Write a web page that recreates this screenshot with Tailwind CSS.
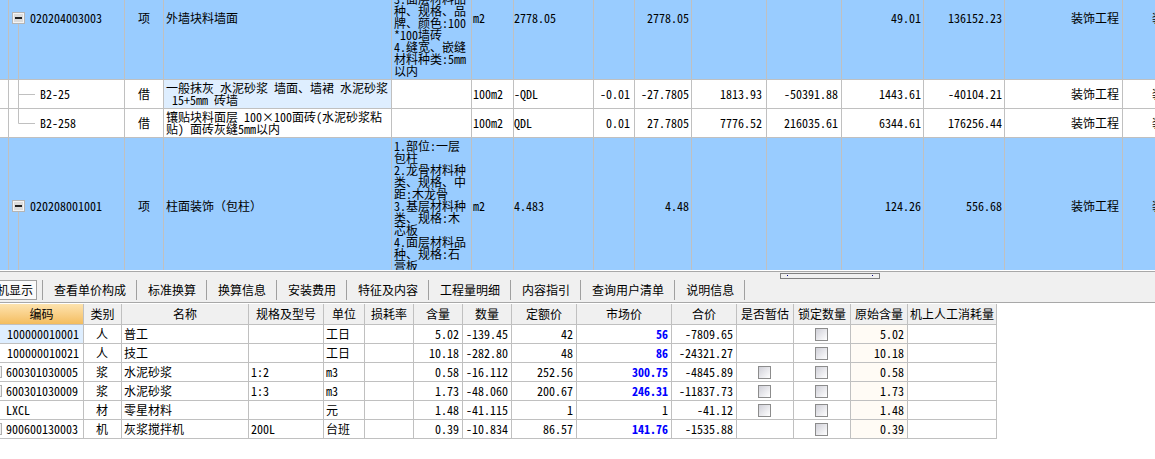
<!DOCTYPE html>
<html lang="zh-CN">
<head>
<meta charset="utf-8">
<script src="https://cdn.jsdelivr.net/npm/@tailwindcss/browser@4"></script>
<title>分部分项</title>
</head>
<body class="m-0 bg-white w-[1155px] h-[459px] overflow-hidden text-[12px] leading-[12px] text-black font-['Noto_Sans_Mono_CJK_SC','Noto_Sans_CJK_SC','Liberation_Mono',monospace]">

<!-- upper grid -->
<div class="relative h-[270px] overflow-hidden">
  <table class="-mt-[43px] table-fixed border-separate border-spacing-0 w-[1323px] [&_td]:border-r [&_td]:border-b [&_td]:border-[#c0c0c0] [&_td]:align-middle [&_td]:px-[2px] [&_td]:py-0 [&_td]:whitespace-pre">
    <colgroup>
      <col class="w-[9px]"><col class="w-[116px]"><col class="w-[39px]"><col class="w-[228px]"><col class="w-[80px]"><col class="w-[42px]"><col class="w-[80px]"><col class="w-[41px]"><col class="w-[57px]"><col class="w-[75px]"><col class="w-[75px]"><col class="w-[82px]"><col class="w-[81px]"><col class="w-[118px]"><col class="w-[200px]">
    </colgroup>
    <tbody>
      <tr class="h-[123px] bg-[#99ccff]">
        <td></td>
        <td class="!pl-[21px]">020204003003</td>
        <td class="text-center">项</td>
        <td>外墙块料墙面</td>
        <td class="!align-bottom !pb-[2px]">3.面层材料品<br>种、规格、品<br>牌、颜色:100<br>*100墙砖<br>4.缝宽、嵌缝<br>材料种类:5mm<br>以内</td>
        <td class="!pl-[1px]">m2</td>
        <td class="!pl-0">2778.05</td>
        <td></td>
        <td class="text-right">2778.05</td>
        <td></td>
        <td></td>
        <td class="text-right">49.01</td>
        <td class="text-right">136152.23</td>
        <td class="text-right !pr-[3px]">装饰工程</td>
        <td class="!pl-[29px]">装饰工程</td>
      </tr>
      <tr class="h-[29px] bg-white">
        <td></td>
        <td class="!pl-[31px]">B2-25</td>
        <td class="text-center">借</td>
        <td class="!bg-[#deeeff]">一般抹灰 水泥砂浆 墙面、墙裙 水泥砂浆<br> 15+5mm 砖墙</td>
        <td></td>
        <td class="!pl-[1px]">100m2</td>
        <td class="!pl-0">-QDL</td>
        <td class="text-right !pr-[4px]">-0.01</td>
        <td class="text-right">-27.7805</td>
        <td class="text-right !pr-[4px]">1813.93</td>
        <td class="text-right !pr-[3px]">-50391.88</td>
        <td class="text-right">1443.61</td>
        <td class="text-right">-40104.21</td>
        <td class="text-right !pr-[3px]">装饰工程</td>
        <td class="!pl-[29px]">装饰工程</td>
      </tr>
      <tr class="h-[29px] bg-white">
        <td></td>
        <td class="!pl-[31px]">B2-258</td>
        <td class="text-center">借</td>
        <td>镶贴块料面层 100×100面砖(水泥砂浆粘<br>贴) 面砖灰缝5mm以内</td>
        <td></td>
        <td class="!pl-[1px]">100m2</td>
        <td class="!pl-0">QDL</td>
        <td class="text-right !pr-[4px]">0.01</td>
        <td class="text-right">27.7805</td>
        <td class="text-right !pr-[4px]">7776.52</td>
        <td class="text-right !pr-[3px]">216035.61</td>
        <td class="text-right">6344.61</td>
        <td class="text-right">176256.44</td>
        <td class="text-right !pr-[3px]">装饰工程</td>
        <td class="!pl-[29px]">装饰工程</td>
      </tr>
      <tr class="h-[136px] bg-[#99ccff]">
        <td></td>
        <td class="!pl-[21px]">020208001001</td>
        <td class="text-center">项</td>
        <td>柱面装饰（包柱）</td>
        <td>1.部位:一层<br>包柱<br>2.龙骨材料种<br>类、规格、中<br>距:木龙骨<br>3.基层材料种<br>类、规格:木<br>芯板<br>4.面层材料品<br>种、规格:石<br>膏板</td>
        <td class="!pl-[1px]">m2</td>
        <td class="!pl-0">4.483</td>
        <td></td>
        <td class="text-right">4.48</td>
        <td></td>
        <td></td>
        <td class="text-right">124.26</td>
        <td class="text-right">556.68</td>
        <td class="text-right !pr-[3px]">装饰工程</td>
        <td class="!pl-[29px]">装饰工程</td>
      </tr>
    </tbody>
  </table>
  <!-- tree lines and expand boxes -->
  <svg class="absolute left-0 top-0 w-[40px] h-[270px]" viewBox="0 0 40 270" fill="none">
    <path d="M18.5 23V123.5H35M18.5 94.5H35M18.5 212V270" stroke="#c0c0c0"/>
    <rect x="12.5" y="12.5" width="12" height="11" fill="#f4f4f4" stroke="#b4b4b4"/>
    <rect x="14" y="14" width="9" height="8" fill="#dcdcdc"/>
    <rect x="15" y="17" width="7" height="2" fill="#222"/>
    <rect x="12.5" y="200.5" width="12" height="11" fill="#f4f4f4" stroke="#b4b4b4"/>
    <rect x="14" y="202" width="9" height="8" fill="#dcdcdc"/>
    <rect x="15" y="205" width="7" height="2" fill="#222"/>
  </svg>
</div>
<div class="h-px bg-white"></div>

<!-- tab strip -->
<div class="relative h-[32px] border-y border-[#a8a8a8] bg-[#f0f0f0] overflow-hidden">
  <div class="absolute left-[780px] top-px w-[100px] h-[6px] border border-[#808080] bg-[#f0f0f0]">
    <span class="absolute left-[6px] top-[1px] w-px h-px bg-[#000080]"></span>
    <span class="absolute right-[6px] top-[1px] w-px h-px bg-[#000080]"></span>
  </div>
  <div class="flex h-[20px] mt-[8px]">
    <div class="flex items-center justify-end w-[37px] shrink-0 border border-[#a0a0a0] border-l-0 bg-[#fafafa] pr-[3px] whitespace-nowrap"><span>机显示</span></div>
    <div class="w-[6px] border-r border-[#a0a0a0]"></div>
    <div class="flex items-center pl-[11px] pr-[10px] border-r border-[#a0a0a0] whitespace-nowrap">查看单价构成</div>
    <div class="flex items-center pl-[11px] pr-[10px] border-r border-[#a0a0a0] whitespace-nowrap">标准换算</div>
    <div class="flex items-center pl-[11px] pr-[10px] border-r border-[#a0a0a0] whitespace-nowrap">换算信息</div>
    <div class="flex items-center pl-[11px] pr-[10px] border-r border-[#a0a0a0] whitespace-nowrap">安装费用</div>
    <div class="flex items-center pl-[11px] pr-[10px] border-r border-[#a0a0a0] whitespace-nowrap">特征及内容</div>
    <div class="flex items-center pl-[11px] pr-[10px] border-r border-[#a0a0a0] whitespace-nowrap">工程量明细</div>
    <div class="flex items-center pl-[11px] pr-[10px] border-r border-[#a0a0a0] whitespace-nowrap">内容指引</div>
    <div class="flex items-center pl-[11px] pr-[10px] border-r border-[#a0a0a0] whitespace-nowrap">查询用户清单</div>
    <div class="flex items-center pl-[11px] pr-[10px] border-r border-[#a0a0a0] whitespace-nowrap">说明信息</div>
  </div>
</div>

<!-- lower grid -->
<table class="mt-px table-fixed border-separate border-spacing-0 w-[997px] [&_td]:border-r [&_td]:border-b [&_td]:border-[#c0c0c0] [&_td]:pl-[2px] [&_td]:pr-[3px] [&_td]:py-0 [&_td]:align-middle [&_td]:whitespace-nowrap [&_th]:border-r [&_th]:border-b [&_th]:border-[#c0c0c0] [&_th]:bg-[#f0f0f0] [&_th]:font-normal [&_th]:p-0 [&_th]:text-center">
  <colgroup>
    <col class="w-[84px]"><col class="w-[38px]"><col class="w-[127px]"><col class="w-[75px]"><col class="w-[41px]"><col class="w-[49px]"><col class="w-[49px]"><col class="w-[49px]"><col class="w-[65px]"><col class="w-[95px]"><col class="w-[65px]"><col class="w-[57px]"><col class="w-[57px]"><col class="w-[57px]"><col class="w-[89px]">
  </colgroup>
  <thead>
    <tr class="h-[21px]">
      <th class="!bg-transparent bg-linear-to-b from-[#fde3ae] to-[#f4bd5e]">编码</th><th>类别</th><th>名称</th><th>规格及型号</th><th>单位</th><th>损耗率</th><th>含量</th><th>数量</th><th>定额价</th><th>市场价</th><th>合价</th><th>是否暂估</th><th>锁定数量</th><th>原始含量</th><th>机上人工消耗量</th>
    </tr>
  </thead>
  <tbody>
    <tr class="h-[19px]">
      <td class="bg-[#deeeff] !pl-[7px]">100000010001</td><td class="text-center">人</td><td>普工</td><td></td><td>工日</td><td></td><td class="text-right">5.02</td><td class="text-right">-139.45</td><td class="text-right">42</td><td class="text-right font-bold text-[#0000ff]">56</td><td class="text-right">-7809.65</td><td></td>
      <td><span class="block mx-auto w-[13px] h-[13px] border border-[#8c8c8c] bg-linear-to-br from-[#d0d0d8] to-white"></span></td><td class="text-right bg-[#fffbf5]">5.02</td><td></td>
    </tr>
    <tr class="h-[19px]">
      <td class="!pl-[7px]">100000010021</td><td class="text-center">人</td><td>技工</td><td></td><td>工日</td><td></td><td class="text-right">10.18</td><td class="text-right">-282.80</td><td class="text-right">48</td><td class="text-right font-bold text-[#0000ff]">86</td><td class="text-right">-24321.27</td><td></td>
      <td><span class="block mx-auto w-[13px] h-[13px] border border-[#8c8c8c] bg-linear-to-br from-[#d0d0d8] to-white"></span></td><td class="text-right bg-[#fffbf5]">10.18</td><td></td>
    </tr>
    <tr class="h-[19px]">
      <td class="relative !pl-[6px]"><span class="absolute left-0 top-[3px] w-[2px] h-[12px] border-r border-y border-[#b0b0b0] bg-[#efefef]"></span>600301030005</td><td class="text-center">浆</td><td>水泥砂浆</td><td>1:2</td><td>m3</td><td></td><td class="text-right">0.58</td><td class="text-right">-16.112</td><td class="text-right">252.56</td><td class="text-right font-bold text-[#0000ff]">300.75</td><td class="text-right">-4845.89</td>
      <td><span class="block mx-auto w-[13px] h-[13px] border border-[#8c8c8c] bg-linear-to-br from-[#d0d0d8] to-white"></span></td>
      <td><span class="block mx-auto w-[13px] h-[13px] border border-[#8c8c8c] bg-linear-to-br from-[#d0d0d8] to-white"></span></td><td class="text-right bg-[#fffbf5]">0.58</td><td></td>
    </tr>
    <tr class="h-[19px]">
      <td class="relative !pl-[6px]"><span class="absolute left-0 top-[3px] w-[2px] h-[12px] border-r border-y border-[#b0b0b0] bg-[#efefef]"></span>600301030009</td><td class="text-center">浆</td><td>水泥砂浆</td><td>1:3</td><td>m3</td><td></td><td class="text-right">1.73</td><td class="text-right">-48.060</td><td class="text-right">200.67</td><td class="text-right font-bold text-[#0000ff]">246.31</td><td class="text-right">-11837.73</td>
      <td><span class="block mx-auto w-[13px] h-[13px] border border-[#8c8c8c] bg-linear-to-br from-[#d0d0d8] to-white"></span></td>
      <td><span class="block mx-auto w-[13px] h-[13px] border border-[#8c8c8c] bg-linear-to-br from-[#d0d0d8] to-white"></span></td><td class="text-right bg-[#fffbf5]">1.73</td><td></td>
    </tr>
    <tr class="h-[19px]">
      <td class="!pl-[6px]">LXCL</td><td class="text-center">材</td><td>零星材料</td><td></td><td>元</td><td></td><td class="text-right">1.48</td><td class="text-right">-41.115</td><td class="text-right">1</td><td class="text-right">1</td><td class="text-right">-41.12</td>
      <td><span class="block mx-auto w-[13px] h-[13px] border border-[#8c8c8c] bg-linear-to-br from-[#d0d0d8] to-white"></span></td>
      <td><span class="block mx-auto w-[13px] h-[13px] border border-[#8c8c8c] bg-linear-to-br from-[#d0d0d8] to-white"></span></td><td class="text-right bg-[#fffbf5]">1.48</td><td></td>
    </tr>
    <tr class="h-[19px]">
      <td class="relative !pl-[6px]"><span class="absolute left-0 top-[3px] w-[2px] h-[12px] border-r border-y border-[#b0b0b0] bg-[#efefef]"></span>900600130003</td><td class="text-center">机</td><td>灰浆搅拌机</td><td>200L</td><td>台班</td><td></td><td class="text-right">0.39</td><td class="text-right">-10.834</td><td class="text-right">86.57</td><td class="text-right font-bold text-[#0000ff]">141.76</td><td class="text-right">-1535.88</td><td></td>
      <td><span class="block mx-auto w-[13px] h-[13px] border border-[#8c8c8c] bg-linear-to-br from-[#d0d0d8] to-white"></span></td><td class="text-right bg-[#fffbf5]">0.39</td><td></td>
    </tr>
  </tbody>
</table>
</body>
</html>
